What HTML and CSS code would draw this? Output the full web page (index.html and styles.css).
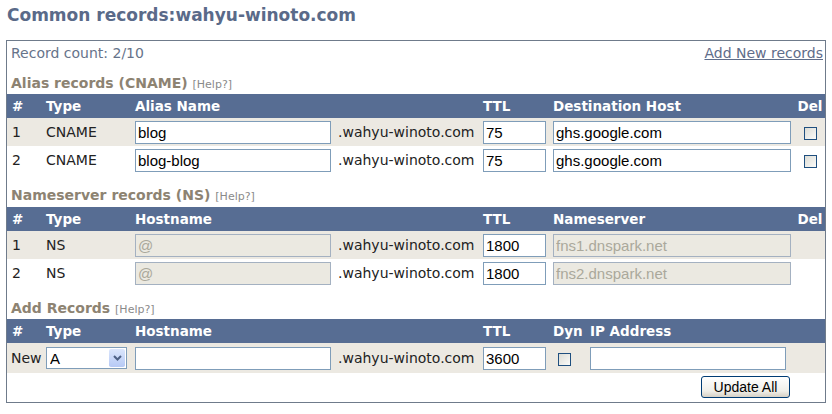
FILE: index.html
```html
<!DOCTYPE html>
<html lang="en">
<head>
  <meta charset="UTF-8">
  <title>Common records</title>
  <link rel="stylesheet" href="styles.css">
</head>
<body>
  <h1 class="page-title">Common records:wahyu-winoto.com</h1>
  <div class="records-box">
    <div class="topbar">
      <span>Record count: 2/10</span>
      <a href="#add" class="add-link">Add New records</a>
    </div>

    <h3 class="section">Alias records (CNAME) <span class="help">[Help?]</span></h3>
    <table class="grid">
      <colgroup>
        <col class="c-num"><col class="c-type"><col class="c-name"><col class="c-zone"><col class="c-ttl"><col class="c-dest"><col>
      </colgroup>
      <tr class="head">
        <th>#</th><th>Type</th><th>Alias Name</th><th></th><th>TTL</th><th>Destination Host</th><th class="center">Del</th>
      </tr>
      <tr class="odd">
        <td>1</td><td>CNAME</td>
        <td><input class="txt name" type="text" value="blog"></td>
        <td>.wahyu-winoto.com</td>
        <td><input class="txt ttl" type="text" value="75"></td>
        <td><input class="txt dest" type="text" value="ghs.google.com"></td>
        <td class="center"><input class="chk" type="checkbox"></td>
      </tr>
      <tr>
        <td>2</td><td>CNAME</td>
        <td><input class="txt name" type="text" value="blog-blog"></td>
        <td>.wahyu-winoto.com</td>
        <td><input class="txt ttl" type="text" value="75"></td>
        <td><input class="txt dest" type="text" value="ghs.google.com"></td>
        <td class="center"><input class="chk" type="checkbox"></td>
      </tr>
    </table>

    <h3 class="section">Nameserver records (NS) <span class="help">[Help?]</span></h3>
    <table class="grid">
      <colgroup>
        <col class="c-num"><col class="c-type"><col class="c-name"><col class="c-zone"><col class="c-ttl"><col class="c-dest"><col>
      </colgroup>
      <tr class="head">
        <th>#</th><th>Type</th><th>Hostname</th><th></th><th>TTL</th><th>Nameserver</th><th class="center">Del</th>
      </tr>
      <tr class="odd">
        <td>1</td><td>NS</td>
        <td><input class="txt name" type="text" value="@" disabled></td>
        <td>.wahyu-winoto.com</td>
        <td><input class="txt ttl" type="text" value="1800"></td>
        <td><input class="txt dest" type="text" value="fns1.dnspark.net" disabled></td>
        <td></td>
      </tr>
      <tr>
        <td>2</td><td>NS</td>
        <td><input class="txt name" type="text" value="@" disabled></td>
        <td>.wahyu-winoto.com</td>
        <td><input class="txt ttl" type="text" value="1800"></td>
        <td><input class="txt dest" type="text" value="fns2.dnspark.net" disabled></td>
        <td></td>
      </tr>
    </table>

    <h3 class="section" id="add">Add Records <span class="help">[Help?]</span></h3>
    <table class="grid">
      <colgroup>
        <col class="c-num"><col class="c-type"><col class="c-name"><col class="c-zone"><col class="c-ttl"><col class="c-dyn"><col>
      </colgroup>
      <tr class="head">
        <th>#</th><th>Type</th><th>Hostname</th><th></th><th>TTL</th><th>Dyn</th><th>IP Address</th>
      </tr>
      <tr class="odd new-row">
        <td class="new">New</td>
        <td>
          <span class="select-wrap">
            <select class="sel">
              <option>A</option><option>AAAA</option><option>MX</option><option>TXT</option>
            </select>
            <span class="sel-arrow">
              <svg width="9" height="6" viewBox="0 0 9 6"><path d="M1 1 L4.5 4.5 L8 1" fill="none" stroke="#4d6185" stroke-width="2"/></svg>
            </span>
          </span>
        </td>
        <td><input class="txt name" type="text" value=""></td>
        <td>.wahyu-winoto.com</td>
        <td><input class="txt ttl" type="text" value="3600"></td>
        <td class="dyn"><input class="chk" type="checkbox"></td>
        <td><input class="txt ip" type="text" value=""></td>
      </tr>
    </table>

    <div class="actions">
      <button class="btn" type="button">Update All</button>
    </div>
  </div>
</body>
</html>
```

FILE: styles.css
```css
body { margin: 0; padding: 0 6px; background: #fff; font-family: "DejaVu Sans", Verdana, sans-serif; font-size: 14px; color: #222; }
.page-title { margin: 6px 0 15px 1px; height: 19px; font-size: 17px; line-height: 19px; font-weight: bold; color: #5a6a89; }

.records-box { width: 818px; border: 1px solid #6f7b8b; padding: 0 0 4px; }
.topbar { display: flex; justify-content: space-between; height: 16px; padding: 4px 2px 0 4px; line-height: 16px; color: #66738a; }
.add-link { color: #5f6d8a; text-decoration: underline; }

.section { height: 16px; margin: 14px 0 3px 4px; font-size: 14px; line-height: 16px; font-weight: bold; color: #8d8372; }
.grid + .section { margin-top: 13px; margin-bottom: 4px; }
.grid + #add { margin-top: 13px; margin-bottom: 3px; }
.help { font-size: 11px; line-height: 10px; font-weight: normal; color: #8a8a8a; }

.grid { width: 100%; border-collapse: collapse; table-layout: fixed; }
.c-num { width: 34px; }
.c-type { width: 89px; }
.c-name { width: 203px; }
.c-zone { width: 145px; }
.c-ttl { width: 70px; }
.c-dest { width: 247px; }
.c-dyn { width: 37px; }

.grid th { height: 24px; padding: 0 5px; background: #576d93; color: #fff; font-size: 13.5px; line-height: 16px; font-weight: bold; text-align: left; white-space: nowrap; }
.grid td { height: 28px; padding: 0 5px; line-height: 16px; vertical-align: middle; white-space: nowrap; }
.grid .center { text-align: center; padding: 0; }
.odd td { background: #ece9e2; }
.new-row td { height: 30px; }
.grid td.new { padding-left: 4px; }
.grid td.dyn { padding-left: 10px; }

.txt { box-sizing: border-box; height: 23px; margin: 0; padding: 0 2px; border: 1px solid #7f9db9; background: #fff; font-family: "Liberation Sans", Arial, sans-serif; font-size: 15px; color: #000; display: block; }
.txt:disabled { background: #ebe9e1; border-color: #a4b1c1; color: #aaa89b; }
.name { width: 196px; }
.ttl { width: 63px; }
.dest { width: 238px; }
.ip { width: 196px; }

.chk { appearance: none; -webkit-appearance: none; width: 13px; height: 13px; margin: 0; border: 1px solid #1f4f7f; background: linear-gradient(135deg, #dcdcd5, #fbfbf9); vertical-align: middle; display: inline-block; }

.select-wrap { position: relative; display: block; width: 81px; height: 22px; }
.sel { appearance: none; -webkit-appearance: none; box-sizing: border-box; width: 81px; height: 22px; margin: 0; padding: 0 0 0 3px; border: 1px solid #7f9db9; background: #fff; font-family: "Liberation Sans", Arial, sans-serif; font-size: 15px; color: #000; }
.sel-arrow { position: absolute; top: 2px; right: 2px; width: 16px; height: 18px; background: linear-gradient(#dbe6fc, #b6c9f5); border-radius: 2px; display: flex; align-items: center; justify-content: center; }

.actions { height: 22px; text-align: right; padding: 3px 35px 0 0; }
.btn { box-sizing: border-box; width: 89px; height: 22px; padding: 0; border: 1px solid #003c74; border-radius: 3px; background: linear-gradient(#ffffff, #f0efe9 70%, #d6d0c5); font-family: "Liberation Sans", Arial, sans-serif; font-size: 14px; color: #000; vertical-align: top; }
```
